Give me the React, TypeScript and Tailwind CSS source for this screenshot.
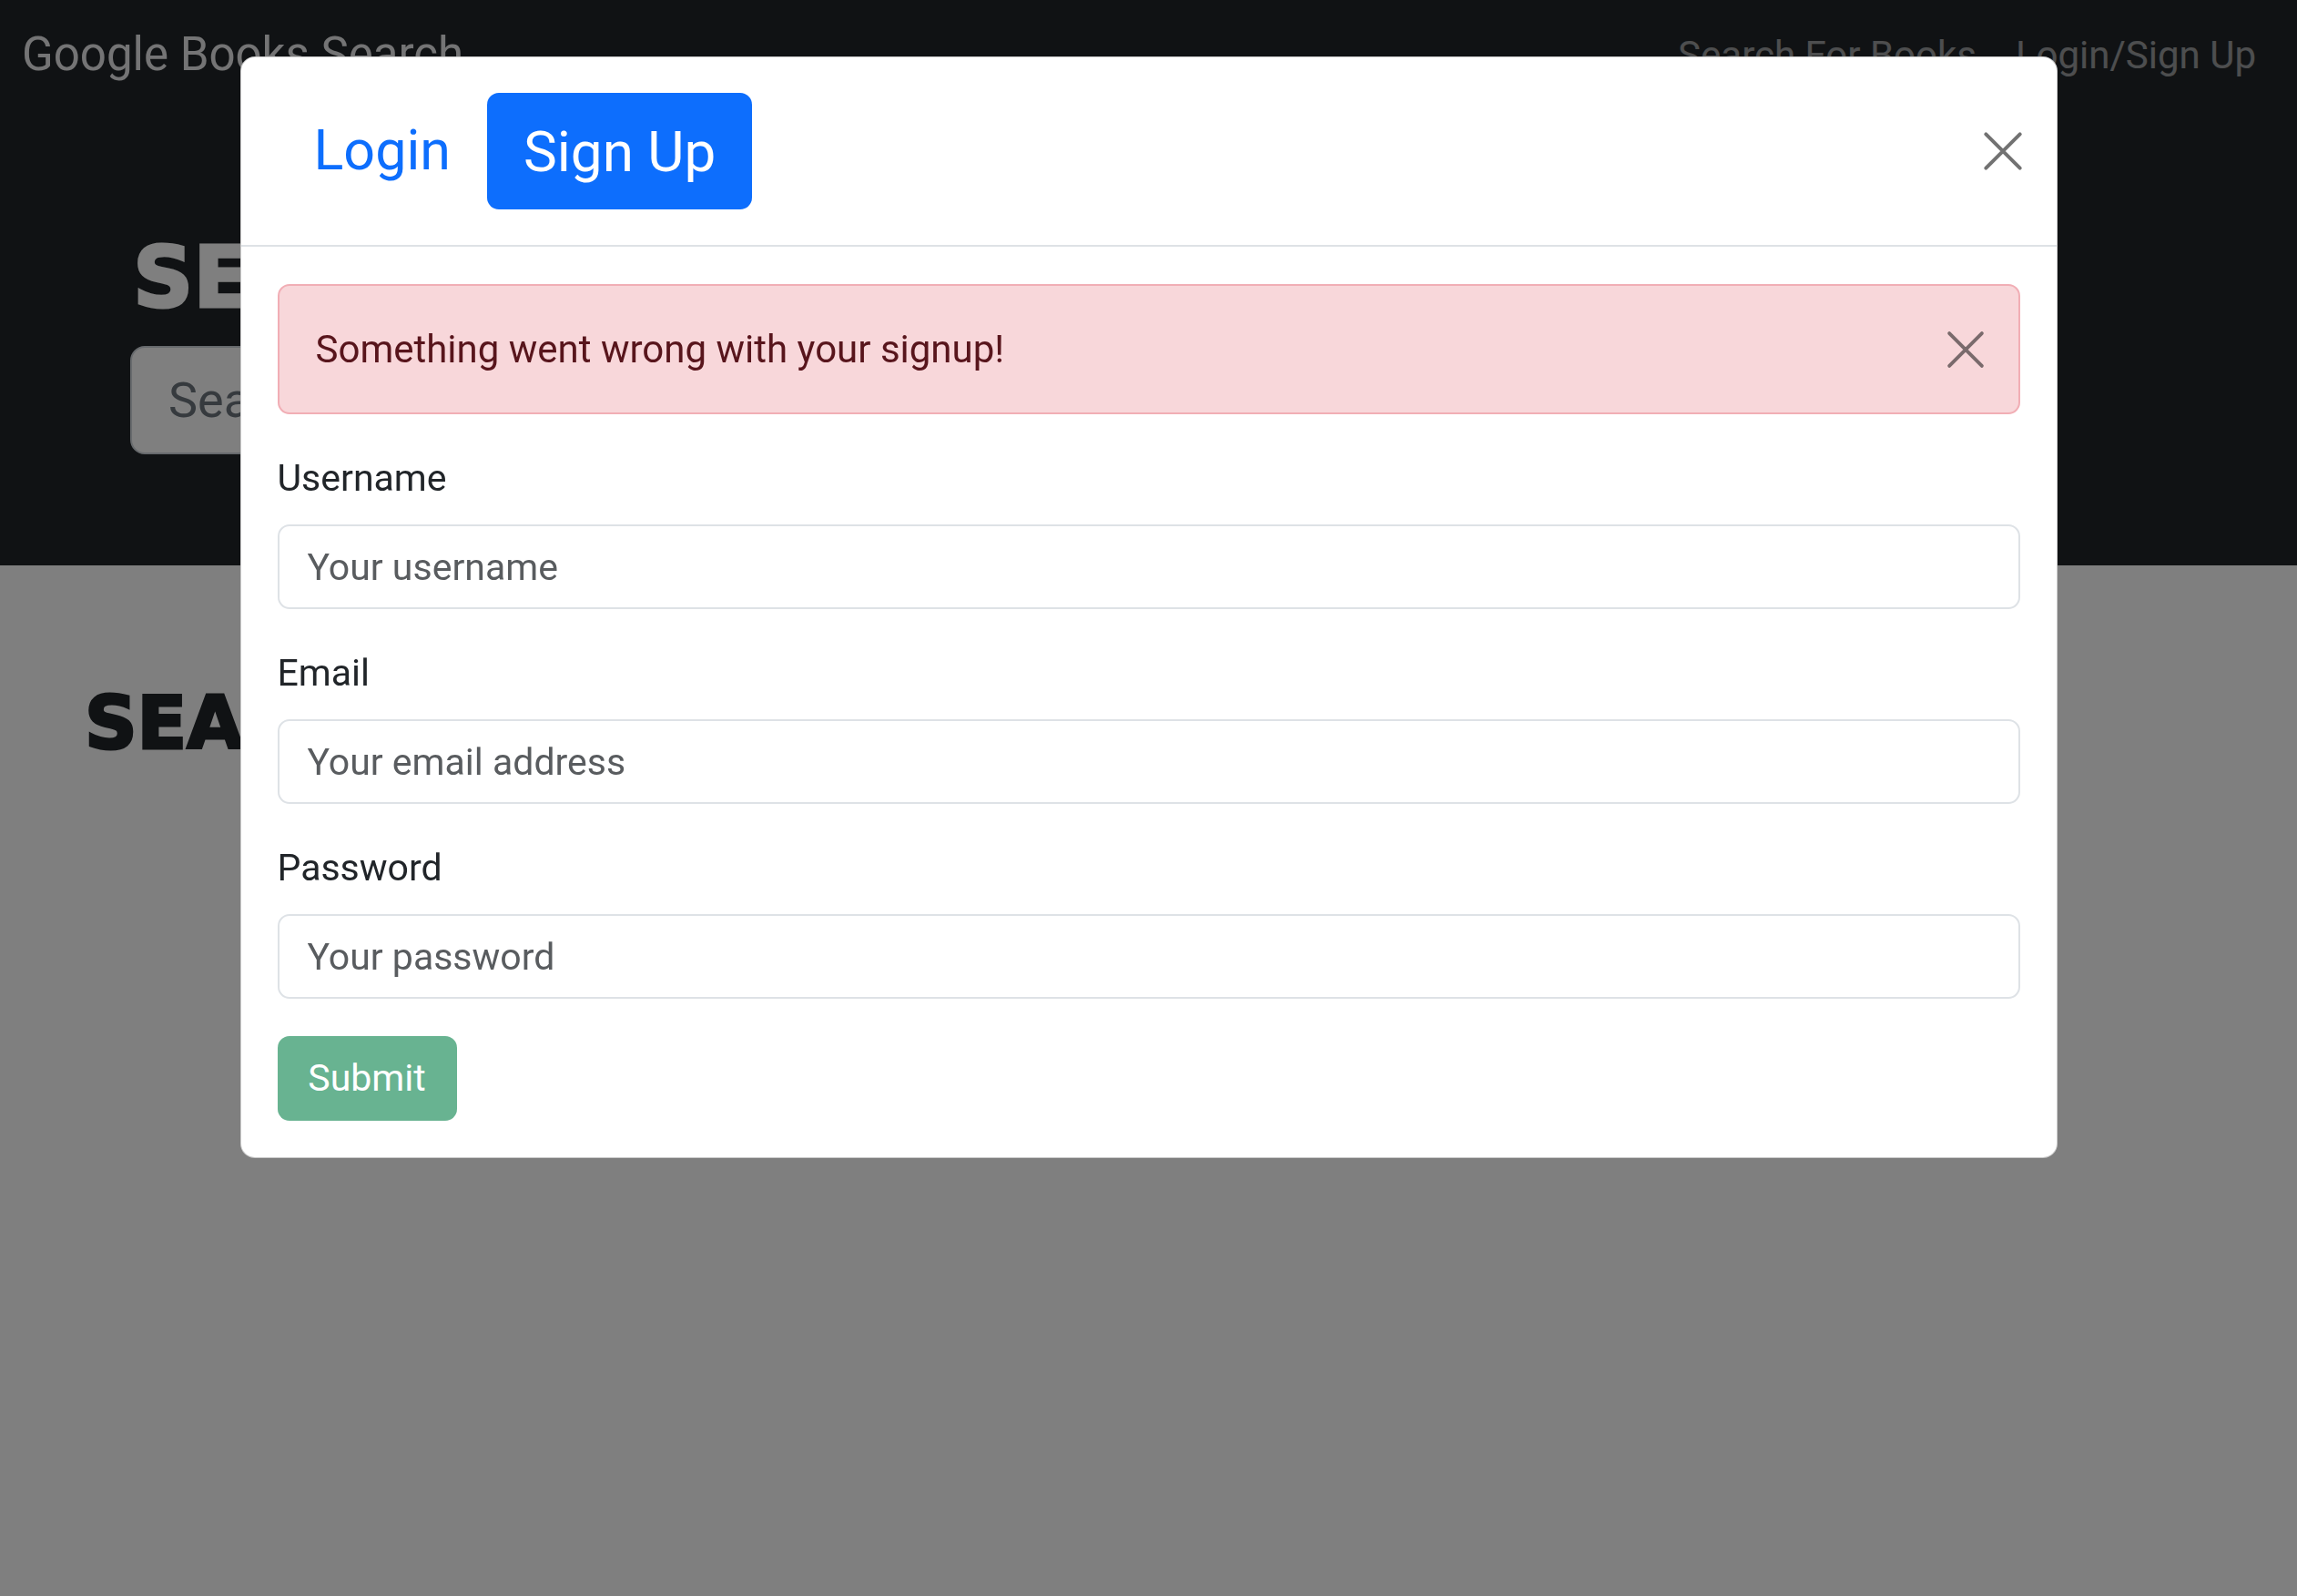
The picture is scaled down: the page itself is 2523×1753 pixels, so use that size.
import React from 'react';

function CloseIcon({ size, color, stroke }: { size: number; color: string; stroke: number }) {
  return (
    <svg width={size} height={size} viewBox="0 0 16 16" fill="none">
      <path d="M1.5 1.5l13 13M14.5 1.5l-13 13" stroke={color} strokeWidth={stroke} strokeLinecap="round" />
    </svg>
  );
}

export default function App() {
  return (
    <div className="relative min-h-screen w-full overflow-hidden bg-white font-['Roboto',sans-serif]">
      {/* Page behind the modal */}
      <header className="h-[621px] bg-[#212529]">
        <nav className="flex h-[120px] items-center justify-between pl-[24px] pr-[45px]">
          <span className="text-[51px] text-white/90">Google Books Search</span>
          <div className="flex gap-[43px]">
            <a className="text-[42px] text-white/55">Search For Books</a>
            <a className="text-[42px] text-white/55">Login/Sign Up</a>
          </div>
        </nav>
        <div className="pl-[146px] pt-[140px]">
          <h1 className="text-[92px] leading-none font-bold text-white font-['DejaVu_Sans',sans-serif] [-webkit-text-stroke:3px_white]">SEARCH FOR BOOKS!</h1>
          <div className="mt-[28px] ml-[-3px] flex h-[119px] w-[1400px] items-center rounded-[16px] border-[2px] border-[#ced4da] bg-white pl-[40px] text-[54px] text-[#6c757d]">
            Search for a book
          </div>
        </div>
      </header>
      <main className="pl-[93px] pt-[134px]">
        <h2 className="text-[80px] leading-none font-bold text-[#212529] font-['DejaVu_Sans',sans-serif] [-webkit-text-stroke:3px_#212529]">SEARCH FOR A BOOK TO BEGIN</h2>
      </main>

      {/* Backdrop */}
      <div className="fixed inset-0 bg-black/50" />

      {/* Modal */}
      <div className="fixed inset-0 flex justify-center pt-[62px]">
        <div className="h-fit w-[1996px] rounded-[16px] border border-black/20 bg-white">
          <div className="flex h-[208px] items-center justify-between border-b-[2px] border-[#dee2e6] px-[40px]">
            <div className="flex items-center">
              <button className="h-[128px] rounded-[13px] px-[40px] text-[61px] text-[#0d6efd]">Login</button>
              <button className="h-[128px] rounded-[13px] bg-[#0d6efd] px-[40px] text-[62px] text-white">Sign Up</button>
            </div>
            <button className="mr-[-11px] flex h-[60px] w-[60px] items-center justify-center">
              <CloseIcon size={46} color="#727272" stroke={1.4} />
            </button>
          </div>

          <div className="px-[40px] pt-[41px] pb-[40px]">
            <div className="flex h-[143px] items-center justify-between rounded-[13px] border-[2px] border-[#f1aeb5] bg-[#f8d7da] pl-[40px] pr-[36px] text-[42px] text-[#58151c]">
              <span>Something went wrong with your signup!</span>
              <CloseIcon size={44} color="#7a6a6c" stroke={1.4} />
            </div>

            <div className="mt-[40px]">
              <label className="block text-[41px] leading-[60px] text-[#212529]">Username</label>
              <input
                placeholder="Your username"
                className="mt-[21px] h-[93px] w-full rounded-[13px] border-[2px] border-[#dee2e6] px-[31px] text-[41px] text-[#212529] outline-none placeholder:text-[#595c5f]"
              />
            </div>
            <div className="mt-[40px]">
              <label className="block text-[41px] leading-[60px] text-[#212529]">Email</label>
              <input
                placeholder="Your email address"
                className="mt-[21px] h-[93px] w-full rounded-[13px] border-[2px] border-[#dee2e6] px-[31px] text-[41px] text-[#212529] outline-none placeholder:text-[#595c5f]"
              />
            </div>
            <div className="mt-[40px]">
              <label className="block text-[41px] leading-[60px] text-[#212529]">Password</label>
              <input
                type="password"
                placeholder="Your password"
                className="mt-[21px] h-[93px] w-full rounded-[13px] border-[2px] border-[#dee2e6] px-[31px] text-[41px] text-[#212529] outline-none placeholder:text-[#595c5f]"
              />
            </div>

            <button className="mt-[41px] h-[93px] w-[197px] rounded-[13px] bg-[#68b391] text-[41px] text-white">Submit</button>
          </div>
        </div>
      </div>
    </div>
  );
}
